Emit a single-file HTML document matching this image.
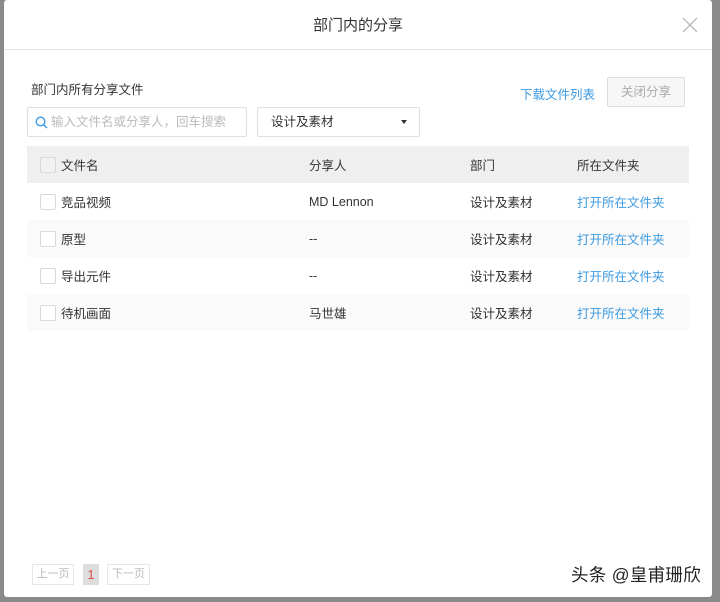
<!DOCTYPE html>
<html><head><meta charset="utf-8"><style>
*{margin:0;padding:0;box-sizing:border-box}
body{width:720px;height:602px;background:#8a8a8a;font-family:"Liberation Sans","Noto Sans CJK SC",sans-serif;font-size:12.5px;color:#333;position:relative;overflow:hidden}
.m{position:absolute;left:4px;top:0;width:708px;height:597px;background:#fff;border-radius:3px}
.hd{height:50px;border-bottom:1px solid #e6e6e6;text-align:center;line-height:52px;font-size:15px;color:#333}
.x{position:absolute;left:678px;top:17px}
.abs{position:absolute}
.tbl{position:absolute;left:23px;top:146px;width:662px}
.r{height:37px;display:flex;align-items:center;position:relative}
.r span{position:absolute}
.cb{left:13px;width:16px;height:16px;border:1px solid #d9d9d9;background:#fff;border-radius:2px}
.lk{color:#3d9ae0}
</style></head><body>
<div class="m">
<div class="hd">部门内的分享</div>
<svg class="x" width="16" height="16" viewBox="0 0 16 16"><path d="M1 1L15 15M15 1L1 15" stroke="#bbb" stroke-width="1.3"/></svg>
<div class="abs" style="left:27px;top:79px;color:#333">部门内所有分享文件</div>
<div class="abs lk" style="left:516px;top:84px">下载文件列表</div>
<div class="abs" style="left:603px;top:77px;width:78px;height:30px;border:1px solid #ddd;border-radius:2px;background:#f7f7f7;color:#aaa;text-align:center;line-height:28px">关闭分享</div>
<div class="abs" style="left:23px;top:107px;width:220px;height:30px;border:1px solid #e0e0e0;border-radius:2px;color:#bbb;line-height:28px;padding-left:23px">输入文件名或分享人，回车搜索</div>
<svg class="abs" style="left:31px;top:116px" width="13" height="13" viewBox="0 0 13 13"><circle cx="5.5" cy="5.5" r="4.3" fill="none" stroke="#3d9ae0" stroke-width="1.4"/><path d="M8.6 8.6L12 12" stroke="#3d9ae0" stroke-width="1.5"/></svg>
<div class="abs" style="left:253px;top:107px;width:163px;height:30px;border:1px solid #e0e0e0;border-radius:2px;line-height:28px;padding-left:13px">设计及素材</div>
<div class="abs" style="left:397px;top:120px;width:0;height:0;border-left:3.5px solid transparent;border-right:3.5px solid transparent;border-top:4px solid #333"></div>
<div class="tbl">
<div class="r" style="background:#efefef"><span class="cb" style="background:#f2f2f2"></span><span style="left:34px">文件名</span><span style="left:282px">分享人</span><span style="left:443px">部门</span><span style="left:550px">所在文件夹</span></div>
<div class="r"><span class="cb"></span><span style="left:34px">竞品视频</span><span style="left:282px">MD Lennon</span><span style="left:443px">设计及素材</span><span class="lk" style="left:550px">打开所在文件夹</span></div>
<div class="r" style="background:#fafafa"><span class="cb"></span><span style="left:34px">原型</span><span style="left:282px">--</span><span style="left:443px">设计及素材</span><span class="lk" style="left:550px">打开所在文件夹</span></div>
<div class="r"><span class="cb"></span><span style="left:34px">导出元件</span><span style="left:282px">--</span><span style="left:443px">设计及素材</span><span class="lk" style="left:550px">打开所在文件夹</span></div>
<div class="r" style="background:#fafafa"><span class="cb"></span><span style="left:34px">待机画面</span><span style="left:282px">马世雄</span><span style="left:443px">设计及素材</span><span class="lk" style="left:550px">打开所在文件夹</span></div>
</div>
<div class="abs" style="left:28px;top:564px;width:42px;height:21px;border:1px solid #e6e6e6;color:#bbb;font-size:11px;text-align:center;line-height:19px">上一页</div>
<div class="abs" style="left:79px;top:564px;width:16px;height:21px;background:#ddd;color:#e05050;font-size:13px;text-align:center;line-height:21px">1</div>
<div class="abs" style="left:103px;top:564px;width:43px;height:21px;border:1px solid #e6e6e6;color:#bbb;font-size:11px;text-align:center;line-height:19px">下一页</div>
<div class="abs" style="left:567px;top:562px;font-size:17.5px;color:#222;letter-spacing:0.3px">头条 @皇甫珊欣</div>
</div>
</body></html>
